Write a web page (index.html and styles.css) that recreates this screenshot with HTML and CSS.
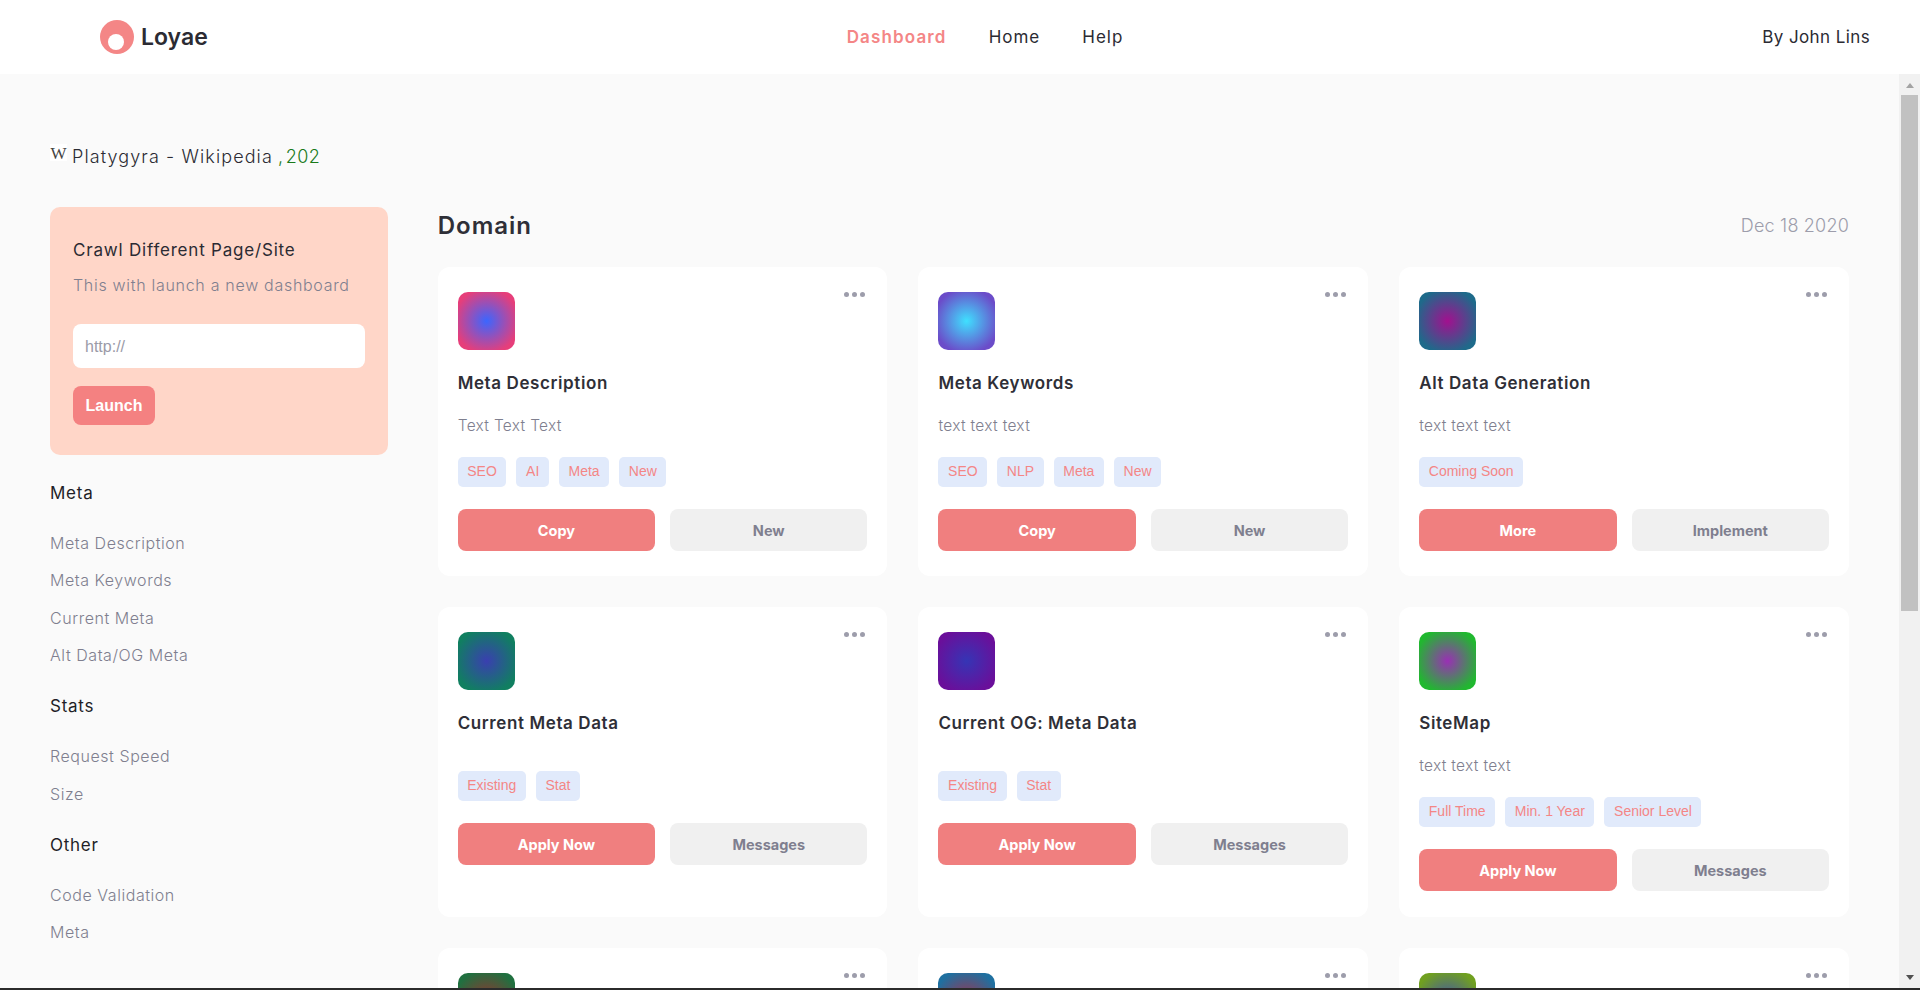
FILE: index.html
```html
<!DOCTYPE html>
<html lang="en">
<head>
<meta charset="UTF-8">
<title>Loyae Dashboard</title>
<link rel="stylesheet" href="styles.css">
</head>
<body>
<header class="topbar">
    <div class="brand">
        <span class="brand-mark"></span>
        <span class="brand-name">Loyae</span>
    </div>
    <nav class="topnav">
        <a class="active">Dashboard</a>
        <a>Home</a>
        <a>Help</a>
    </nav>
    <div class="byline">By John Lins</div>
</header>

<div class="workspace">
    <div class="content">
        <div class="page-title">
            <span class="favicon">W</span>
            <span>Platygyra - Wikipedia</span>
            <span class="status">, 202</span>
        </div>
        <div class="columns">
            <aside class="sidebar">
                <div class="crawl-card">
                    <h3>Crawl Different Page/Site</h3>
                    <p>This with launch a new dashboard</p>
                    <input class="crawl-input" type="text" placeholder="http://">
                    <button class="launch">Launch</button>
                </div>
                <h4>Meta</h4>
                <ul>
                    <li>Meta Description</li>
                    <li>Meta Keywords</li>
                    <li>Current Meta</li>
                    <li>Alt Data/OG Meta</li>
                </ul>
                <h4>Stats</h4>
                <ul>
                    <li>Request Speed</li>
                    <li>Size</li>
                </ul>
                <h4>Other</h4>
                <ul>
                    <li>Code Validation</li>
                    <li>Meta</li>
                </ul>
            </aside>

            <main class="domain">
                <div class="domain-head">
                    <h2>Domain</h2>
                    <span class="date">Dec 18 2020</span>
                </div>
                <div class="card-grid">
                    <div class="card">
                        <span class="dots"><i></i><i></i><i></i></span>
                        <div class="icon icon-1"></div>
                        <h5>Meta Description</h5>
                        <p class="desc">Text Text Text</p>
                        <div class="tags"><span>SEO</span><span>AI</span><span>Meta</span><span>New</span></div>
                        <div class="actions"><button class="primary">Copy</button><button class="secondary">New</button></div>
                    </div>
                    <div class="card">
                        <span class="dots"><i></i><i></i><i></i></span>
                        <div class="icon icon-2"></div>
                        <h5>Meta Keywords</h5>
                        <p class="desc">text text text</p>
                        <div class="tags"><span>SEO</span><span>NLP</span><span>Meta</span><span>New</span></div>
                        <div class="actions"><button class="primary">Copy</button><button class="secondary">New</button></div>
                    </div>
                    <div class="card">
                        <span class="dots"><i></i><i></i><i></i></span>
                        <div class="icon icon-3"></div>
                        <h5>Alt Data Generation</h5>
                        <p class="desc">text text text</p>
                        <div class="tags"><span>Coming Soon</span></div>
                        <div class="actions"><button class="primary">More</button><button class="secondary">Implement</button></div>
                    </div>
                    <div class="card">
                        <span class="dots"><i></i><i></i><i></i></span>
                        <div class="icon icon-4"></div>
                        <h5>Current Meta Data</h5>
                        <p class="desc"></p>
                        <div class="tags"><span>Existing</span><span>Stat</span></div>
                        <div class="actions"><button class="primary">Apply Now</button><button class="secondary">Messages</button></div>
                    </div>
                    <div class="card">
                        <span class="dots"><i></i><i></i><i></i></span>
                        <div class="icon icon-5"></div>
                        <h5>Current OG: Meta Data</h5>
                        <p class="desc"></p>
                        <div class="tags"><span>Existing</span><span>Stat</span></div>
                        <div class="actions"><button class="primary">Apply Now</button><button class="secondary">Messages</button></div>
                    </div>
                    <div class="card">
                        <span class="dots"><i></i><i></i><i></i></span>
                        <div class="icon icon-6"></div>
                        <h5>SiteMap</h5>
                        <p class="desc">text text text</p>
                        <div class="tags"><span>Full Time</span><span>Min. 1 Year</span><span>Senior Level</span></div>
                        <div class="actions"><button class="primary">Apply Now</button><button class="secondary">Messages</button></div>
                    </div>
                    <div class="card">
                        <span class="dots"><i></i><i></i><i></i></span>
                        <div class="icon icon-7"></div>
                    </div>
                    <div class="card">
                        <span class="dots"><i></i><i></i><i></i></span>
                        <div class="icon icon-8"></div>
                    </div>
                    <div class="card">
                        <span class="dots"><i></i><i></i><i></i></span>
                        <div class="icon icon-9"></div>
                    </div>
                </div>
            </main>
        </div>
    </div>
    <div class="scrollbar">
        <span class="arrow-up"></span>
        <div class="scroll-track"><div class="scroll-thumb"></div></div>
        <span class="arrow-down"></span>
    </div>
</div>
<div class="bottom-line"></div>
</body>
</html>
```

FILE: styles.css
```css
* {
    box-sizing: border-box;
}

html, body {
    margin: 0;
    height: 990px;
    overflow: hidden;
}

body {
    font-family: 'Inter', sans-serif;
    display: flex;
    flex-direction: column;
    background-color: #fafafa;
    color: #2b2b33;
}

/* top bar */
.topbar {
    height: 74px;
    flex: none;
    display: grid;
    grid-template-columns: 1fr auto 1fr;
    align-items: center;
    padding: 0 50px 0 100px;
    background: #fff;
}

.brand {
    display: flex;
    align-items: center;
    gap: 7px;
}

.brand-mark {
    width: 34px;
    height: 34px;
    border-radius: 50%;
    background: #f48686;
    display: flex;
    align-items: flex-end;
    justify-content: center;
    padding-bottom: 4px;
}

.brand-mark::after {
    content: '';
    width: 16px;
    height: 16px;
    margin-right: 3px;
    border-radius: 50%;
    background: #fff;
}

.brand-name {
    font-size: 23px;
    font-weight: 600;
    color: #2b2b33;
}

.topnav {
    display: flex;
    gap: 42px;
    font-size: 17px;
    letter-spacing: 1px;
}

.topnav .active {
    color: #f48686;
    font-weight: 600;
    letter-spacing: 1.15px;
}

.byline {
    text-align: right;
    font-size: 17px;
    letter-spacing: 0.4px;
}

/* scrolling area */
.workspace {
    flex: 1;
    display: flex;
    min-height: 0;
}

.content {
    flex: 1;
    min-width: 0;
    overflow: hidden;
    padding: 70px 50px 0 50px;
}

.page-title {
    display: flex;
    align-items: center;
    gap: 5px;
    height: 24px;
    font-size: 18px;
    font-weight: 300;
    letter-spacing: 1.1px;
    color: #2b2b33;
}

.favicon {
    align-self: flex-start;
    width: 17px;
    height: 17px;
    font-family: 'Liberation Serif', serif;
    font-size: 17px;
    line-height: 20px;
    letter-spacing: 0;
    text-align: center;
    background: #fff;
    color: #444;
}

.status {
    color: #1a7a1a;
    letter-spacing: 0.4px;
    word-spacing: -3px;
}

.columns {
    display: flex;
    gap: 49.7px;
    margin-top: 39px;
}

/* sidebar */
.sidebar {
    width: 338px;
    flex: none;
}

.crawl-card {
    height: 248px;
    padding: 31px 23px;
    background: #ffd6c8;
    border-radius: 10px;
}

.crawl-card h3 {
    margin: 0;
    font-size: 17px;
    line-height: 24px;
    font-weight: 400;
    letter-spacing: 0.8px;
}

.crawl-card p {
    margin: 11px 0 0;
    font-size: 16px;
    line-height: 24px;
    font-weight: 350;
    letter-spacing: 0.7px;
    color: #7f7f8f;
}

.crawl-input {
    display: block;
    width: 292px;
    height: 44px;
    margin-top: 27px;
    padding: 1px 12px 0;
    border: none;
    border-radius: 8px;
    background: #fff;
    font-family: 'Liberation Sans', sans-serif;
    font-size: 16px;
}

.crawl-input::placeholder {
    color: #9b9ba8;
}

.launch {
    display: block;
    width: 82px;
    height: 39px;
    margin-top: 18px;
    padding: 0;
    border: none;
    border-radius: 8px;
    background: #f48181;
    color: #fff;
    font-family: 'Liberation Sans', sans-serif;
    font-size: 16px;
    font-weight: 700;
}

.sidebar h4 {
    margin: 27px 0 0;
    font-size: 17px;
    line-height: 24px;
    font-weight: 400;
    letter-spacing: 0.75px;
    color: #1f1f27;
}

.crawl-card + h4 {
    margin-top: 26px;
}

.sidebar ul {
    list-style: none;
    margin: 26px 0 0;
    padding: 0;
}

.sidebar li {
    height: 37.4px;
    line-height: 24px;
    font-size: 16px;
    font-weight: 350;
    letter-spacing: 0.55px;
    color: #7f7f8f;
}

.sidebar li:last-child {
    height: 24px;
}

/* main column */
.domain {
    flex: 1;
    min-width: 0;
}

.domain-head {
    display: flex;
    justify-content: space-between;
    align-items: center;
    height: 36px;
}

.domain-head h2 {
    margin: 0;
    font-size: 24px;
    font-weight: 600;
    letter-spacing: 1px;
    color: #2f2f37;
}

.date {
    font-size: 18px;
    font-weight: 300;
    letter-spacing: 0.2px;
    color: #9d9dab;
}

.card-grid {
    display: grid;
    grid-template-columns: repeat(3, 1fr);
    grid-auto-rows: 309.4px;
    gap: 31px;
    margin-top: 24px;
}

.card {
    position: relative;
    padding: 25px 20px;
    background: #fff;
    border-radius: 12px;
}

.dots {
    position: absolute;
    top: 25px;
    right: 22px;
    display: flex;
    gap: 3px;
}

.dots i {
    width: 5px;
    height: 5px;
    border-radius: 50%;
    background: #9d9dab;
}

.icon {
    width: 57px;
    height: 58px;
    border-radius: 10px;
}

.icon-1 { background: radial-gradient(circle, #3b66ff, #e63e7a 80%); }
.icon-2 { background: radial-gradient(circle, #3fe0ff, #6b4cc9 80%); }
.icon-3 { background: radial-gradient(circle, #a2108f, #1e6a8a 80%); }
.icon-4 { background: radial-gradient(circle, #3a3fb0, #107f60 80%); }
.icon-5 { background: radial-gradient(circle, #3535b5, #6a0f9a 80%); }
.icon-6 { background: radial-gradient(circle, #9a2fb5, #20b82f 80%); }
.icon-7 { background: radial-gradient(circle, #9a2f2f, #207040 80%); }
.icon-8 { background: radial-gradient(circle, #a52f4a, #1f70a0 80%); }
.icon-9 { background: radial-gradient(circle, #3f4fb0, #70a020 80%); }

.card h5 {
    margin: 21px 0 0;
    font-size: 17px;
    line-height: 24px;
    font-weight: 600;
    letter-spacing: 0.6px;
    color: #2f2f37;
}

.desc {
    margin: 19px 0 0;
    font-size: 15.5px;
    line-height: 24px;
    font-weight: 300;
    letter-spacing: 0.3px;
    color: #7f7f8f;
}

.desc:empty {
    height: 17px;
    margin-top: 0;
}

.tags {
    display: flex;
    gap: 10px;
    margin-top: 19px;
}

.tags span {
    height: 30px;
    padding: 0 9.6px;
    line-height: 29px;
    font-family: 'Liberation Sans', sans-serif;
    font-size: 14px;
    color: #f48686;
    background: #e1eafb;
    border-radius: 5px;
}

.actions {
    display: flex;
    gap: 15px;
    margin-top: 22px;
}

.actions button {
    flex: 1;
    height: 42px;
    padding: 0;
    border: none;
    border-radius: 8px;
    font-family: 'Inter', sans-serif;
    font-size: 14.5px;
    font-weight: 700;
}

.primary {
    background: #f07f7f;
    color: #fff;
}

.secondary {
    background: #f0f0f0;
    color: #7f7f8f;
}

/* scrollbar drawing */
.scrollbar {
    width: 21px;
    flex: none;
    display: flex;
    flex-direction: column;
    align-items: center;
    background: #f1f1f1;
}

.arrow-up, .arrow-down {
    flex: none;
    width: 0;
    height: 0;
    border-left: 4.5px solid transparent;
    border-right: 4.5px solid transparent;
}

.arrow-up {
    margin: 9px 0 7px;
    border-bottom: 5px solid #a3a3a3;
}

.arrow-down {
    margin: 0 0 10px;
    border-top: 5px solid #505050;
}

.scroll-track {
    flex: 1;
    width: 100%;
    padding: 0 2px;
}

.scroll-thumb {
    height: 516px;
    background: #c1c1c1;
}

.bottom-line {
    position: fixed;
    left: 0;
    right: 0;
    bottom: 0;
    height: 2px;
    background: #2b2b2b;
}
```
